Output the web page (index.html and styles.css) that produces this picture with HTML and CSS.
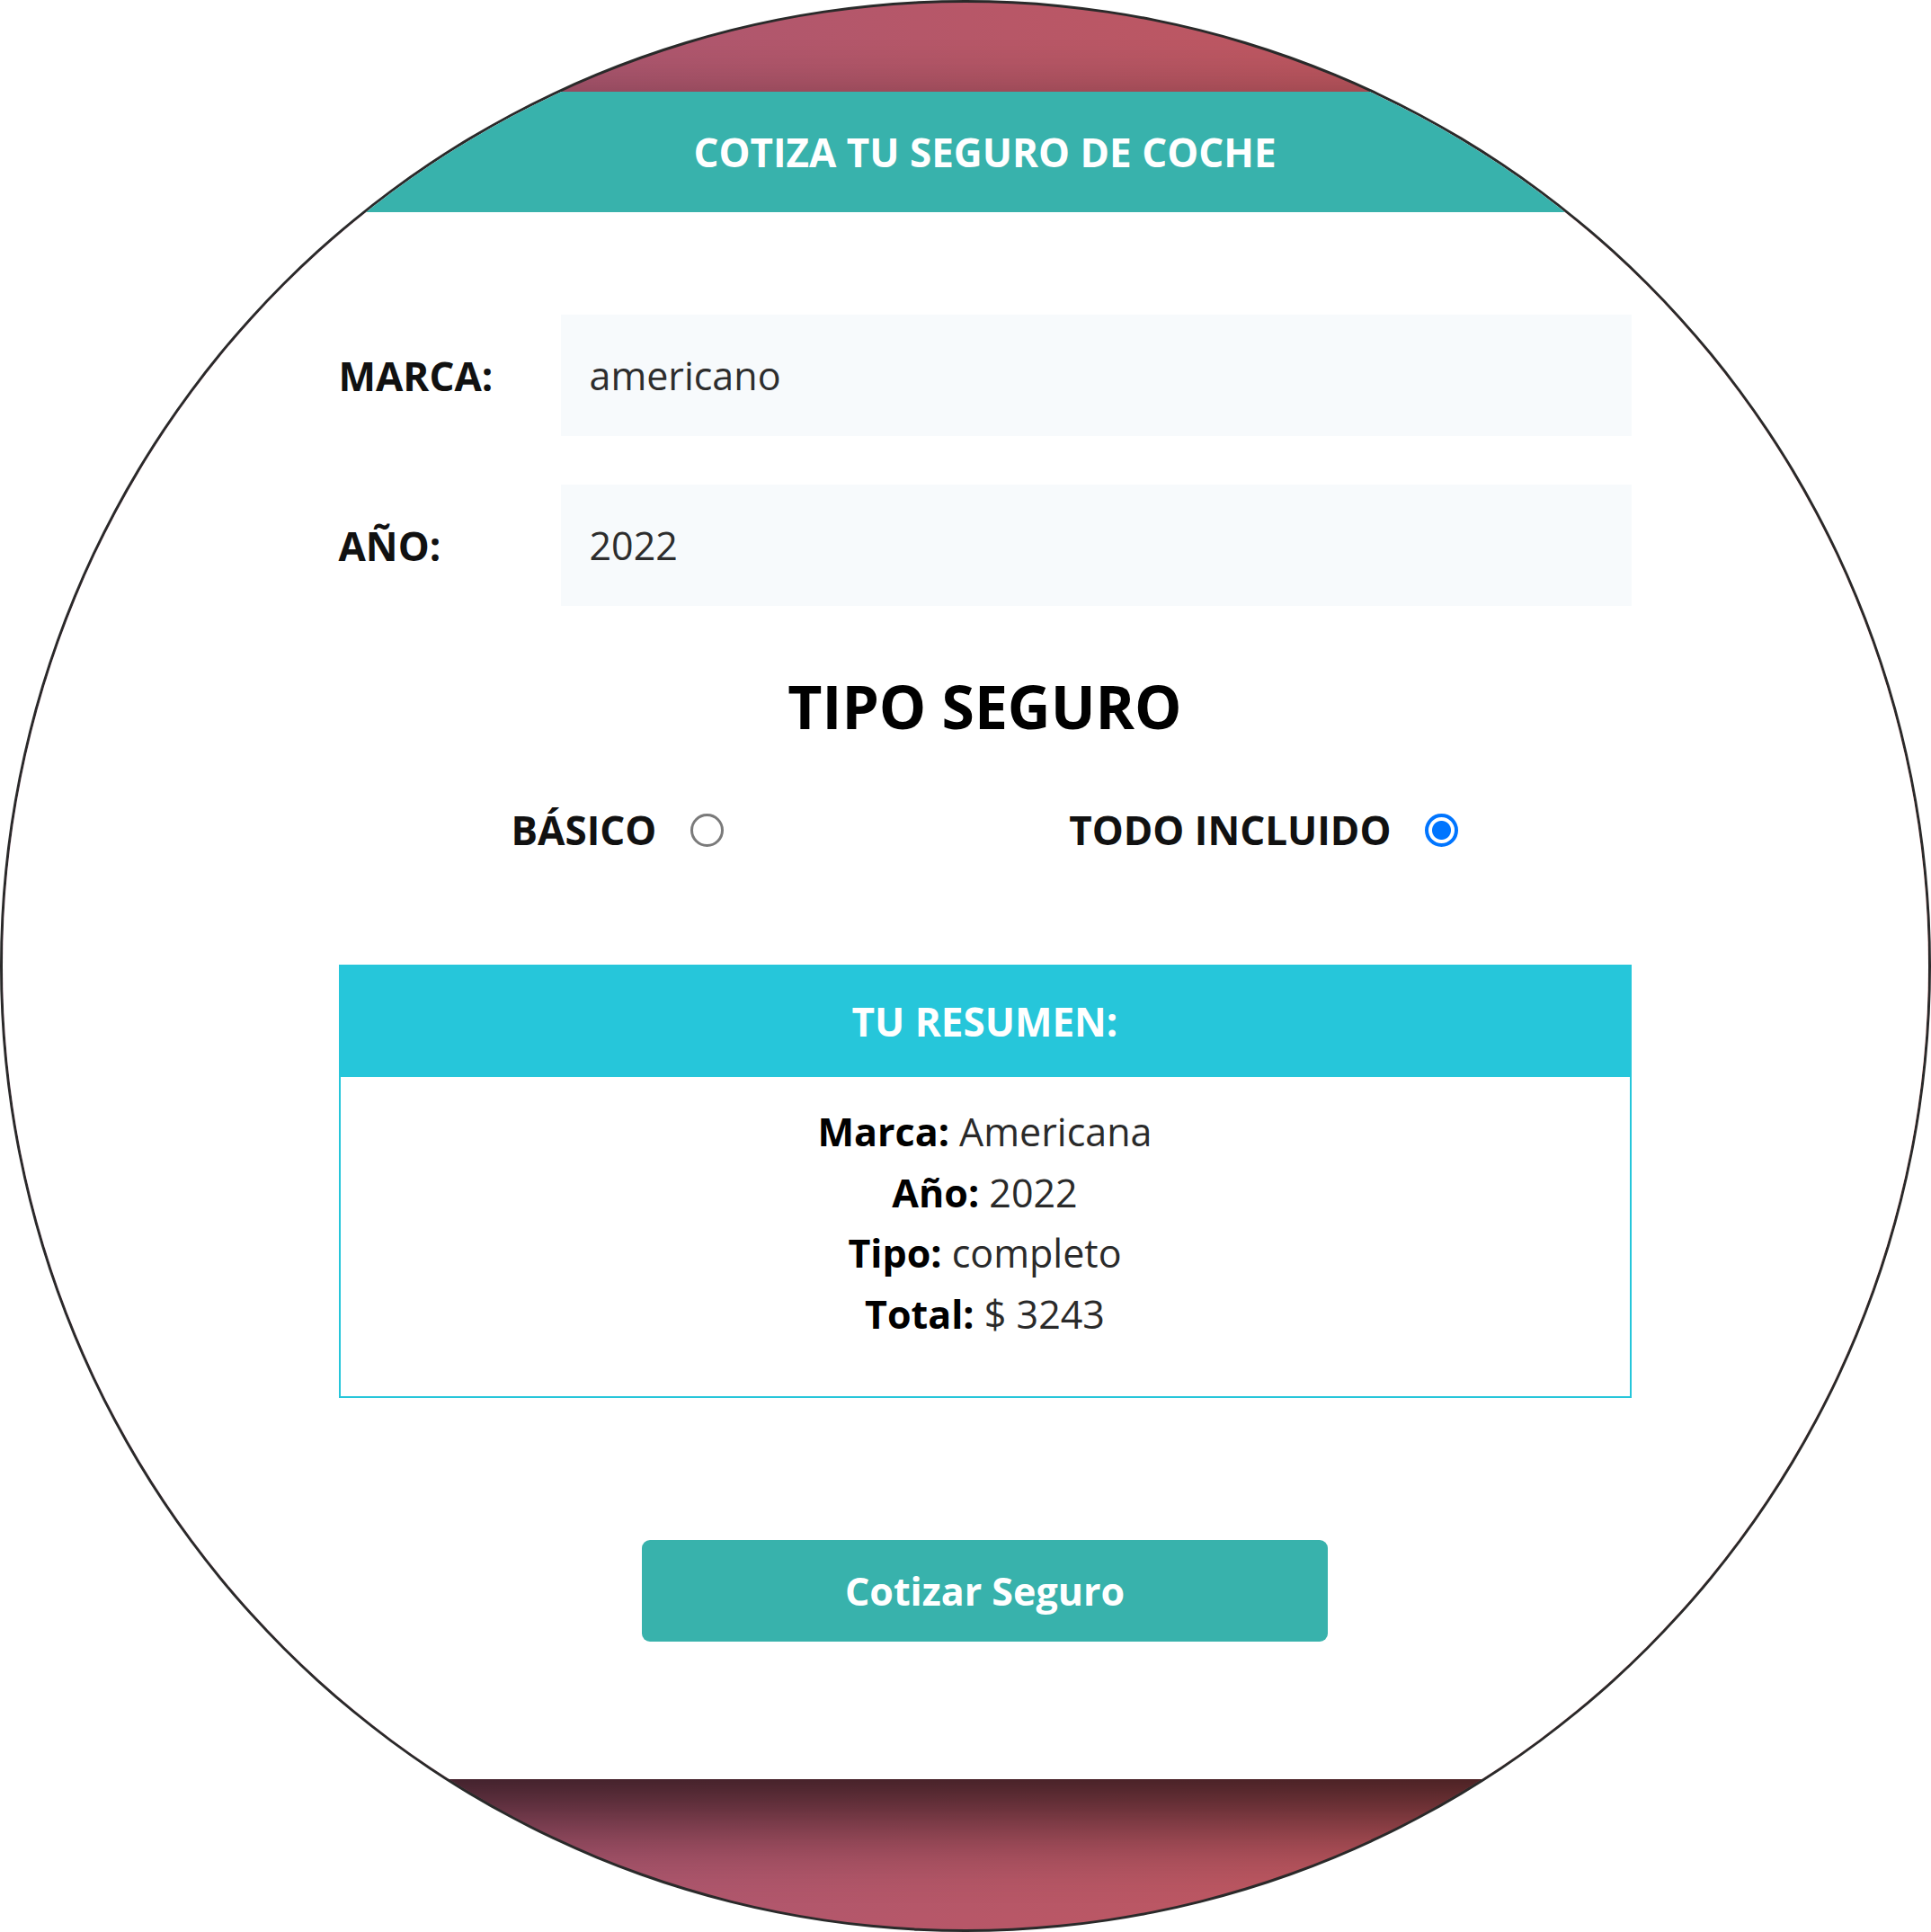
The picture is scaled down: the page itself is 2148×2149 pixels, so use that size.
FILE: index.html
```html
<!DOCTYPE html>
<html lang="es">
<head>
<meta charset="utf-8">
<title>Cotiza tu seguro de coche</title>
<link rel="stylesheet" href="styles.css">
</head>
<body>
<div class="lens">
  <div class="card">
    <header class="card-header">COTIZA TU SEGURO DE COCHE</header>
    <form class="form">
      <div class="field">
        <label class="field-label" for="marca">MARCA:</label>
        <div class="field-input" id="marca">americano</div>
      </div>
      <div class="field field-second">
        <label class="field-label" for="anio">AÑO:</label>
        <div class="field-input" id="anio">2022</div>
      </div>
      <h2 class="section-title">TIPO SEGURO</h2>
      <div class="radios">
        <label class="radio-group">
          <span class="radio-text">BÁSICO</span>
          <span class="radio"></span>
        </label>
        <label class="radio-group">
          <span class="radio-text">TODO INCLUIDO</span>
          <span class="radio radio-checked"></span>
        </label>
      </div>
      <div class="summary">
        <div class="summary-header">TU RESUMEN:</div>
        <div class="summary-body">
          <p class="summary-line"><b>Marca:</b> Americana</p>
          <p class="summary-line"><b>Año:</b> 2022</p>
          <p class="summary-line"><b>Tipo:</b> completo</p>
          <p class="summary-line"><b>Total:</b> $ 3243</p>
        </div>
      </div>
      <div class="actions">
        <button type="button" class="btn">Cotizar Seguro</button>
      </div>
    </form>
  </div>
</div>
</body>
</html>
```

FILE: styles.css
```css
* { box-sizing: border-box; }

html, body {
  margin: 0;
  padding: 0;
  background: #ffffff;
}

body {
  font-family: "Open Sans", "Noto Sans", sans-serif;
  color: #111;
}

.lens {
  width: 2148px;
  height: 2149px;
  border-radius: 50%;
  border: 3px solid #2a2a2a;
  overflow: hidden;
  background: linear-gradient(to right, #a1587d 0%, #cf5855 100%);
  padding-top: 99px;
  padding-left: 43px;
  display: flex;
  justify-content: center;
  align-items: flex-start;
}

.card {
  width: 2400px;
  flex: none;
  background: #ffffff;
  box-shadow: 0 40px 90px rgba(0, 0, 0, 0.75);
}

.card-header {
  height: 134px;
  background: #38b2ac;
  color: #ffffff;
  font-weight: 700;
  font-size: 44px;
  display: flex;
  align-items: center;
  justify-content: center;
}

.form {
  padding: 114px 481px 153px;
}

.field {
  display: flex;
  align-items: center;
}

.field-second {
  margin-top: 54px;
}

.field-label {
  flex: 0 0 247px;
  font-size: 44px;
  font-weight: 700;
  color: #111;
}

.field-input {
  flex: 1;
  height: 135px;
  background: #f7fafc;
  padding-left: 32px;
  display: flex;
  align-items: center;
  font-size: 43px;
  color: #2d2d2d;
}

.section-title {
  margin: 72px 0 0;
  text-align: center;
  font-size: 66px;
  line-height: 1.2;
  font-weight: 700;
  color: #000;
}

.radios {
  margin-top: 72px;
  display: flex;
  justify-content: space-around;
  align-items: center;
}

.radio-group {
  display: flex;
  align-items: center;
  gap: 38px;
}

.radio-text {
  font-size: 44px;
  line-height: 1.2;
  font-weight: 700;
  color: #111;
}

.radio {
  width: 37px;
  height: 37px;
  border-radius: 50%;
  border: 3px solid #7a7a7a;
  background: #fff;
}

.radio-checked {
  border: 4px solid #0075ff;
  background: radial-gradient(circle, #0075ff 0 10px, #ffffff 11px);
}

.summary {
  margin-top: 123px;
  border: 2px solid #26c6da;
}

.summary-header {
  height: 123px;
  background: #26c6da;
  color: #ffffff;
  font-size: 44px;
  font-weight: 700;
  display: flex;
  align-items: center;
  justify-content: center;
}

.summary-body {
  padding: 27px 0 58px;
  text-align: center;
}

.summary-line {
  margin: 0;
  font-size: 43px;
  line-height: 67.6px;
  color: #2a2a2a;
}

.summary-line b {
  color: #000;
  font-weight: 700;
}

.actions {
  margin-top: 158px;
  display: flex;
  justify-content: center;
}

.btn {
  width: 763px;
  height: 113px;
  border: none;
  border-radius: 9px;
  background: #38b2ac;
  color: #ffffff;
  font-family: "Open Sans", "Noto Sans", sans-serif;
  font-size: 43px;
  font-weight: 700;
  cursor: pointer;
}
```
